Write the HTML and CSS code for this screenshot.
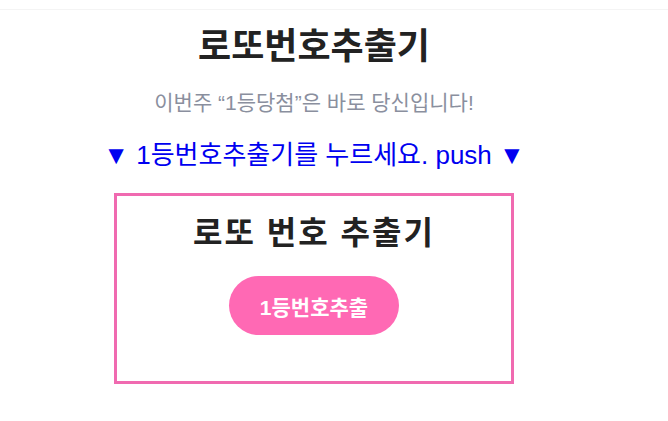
FILE: index.html
```html
<!DOCTYPE html>
<html lang="ko">
<head>
    <meta charset="UTF-8">
    <title>로또번호추출기</title>
    <link rel="stylesheet" href="styles.css">
</head>
<body>
    <div class="topline"></div>
    <div class="page">
        <h1>로또번호추출기</h1>
        <p class="sub">이번주 “1등당첨”은 바로 당신입니다!</p>
        <p class="push">▼ 1등번호추출기를 누르세요. push ▼</p>

        <div class="box">
            <h2>로또 번호 추출기</h2>
            <button type="button" onclick="pick()">1등번호추출</button>
            <div id="result"></div>
        </div>
    </div>

    <script>
        function pick() {
            const nums = [];
            while (nums.length < 6) {
                const n = Math.floor(Math.random() * 45) + 1;
                if (!nums.includes(n)) nums.push(n);
            }
            nums.sort((a, b) => a - b);
            document.getElementById("result").textContent = nums.join(", ");
        }
    </script>
</body>
</html>
```

FILE: styles.css
```css
body {
    margin: 0;
    background: #fff;
    font-family: "Liberation Sans", "Noto Sans CJK KR", sans-serif;
    color: #222;
}

.topline {
    height: 9px;
    border-bottom: 1px solid #f4f4f4;
}

.page {
    width: 628px;
    display: flex;
    flex-direction: column;
    align-items: center;
}

h1 {
    font-size: 36px;
    font-weight: 700;
    margin: 17px 0 0;
    line-height: 40px;
}

.sub {
    font-size: 21px;
    color: #8a8f9e;
    margin: 24px 0 0;
    line-height: 24px;
}

.push {
    font-size: 26px;
    color: #0000f0;
    margin: 25px 0 0;
    line-height: 30px;
}

/* 추출기 박스 */
.box {
    width: 394px;
    height: 185px;
    border: 3px solid #f06ab0;
    margin-top: 23px;
    display: flex;
    flex-direction: column;
    align-items: center;
}

.box h2 {
    font-size: 32px;
    font-weight: 700;
    margin: 19px 0 0;
    line-height: 36px;
    letter-spacing: 2px;
}

button {
    margin-top: 25px;
    width: 170px;
    height: 59px;
    border: none;
    border-radius: 30px;
    background: #ff69b4;
    color: #fff;
    font-family: inherit;
    font-size: 21px;
    font-weight: 700;
    cursor: pointer;
}

#result {
    margin-top: 10px;
    font-size: 16px;
}
```
